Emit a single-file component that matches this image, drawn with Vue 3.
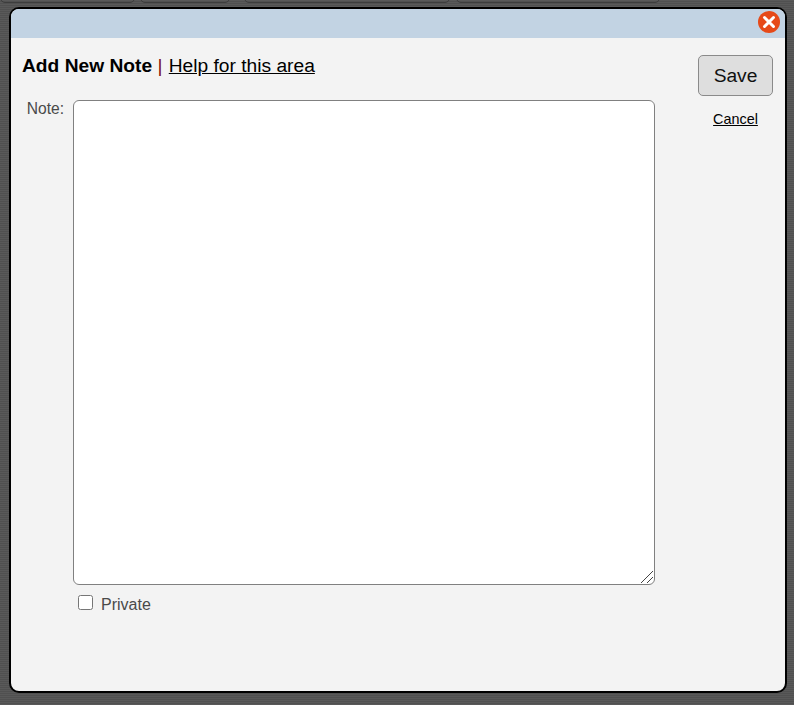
<template>
  <div class="page">
    <div class="tabs">
      <span
        v-for="t in tabs"
        :key="t.left"
        class="tab"
        :style="{ width: t.width + 'px', marginLeft: t.gap + 'px' }"
      ></span>
    </div>
    <div class="modal">
      <div class="bar">
        <button class="close" aria-label="Close">
          <svg width="22" height="22" viewBox="0 0 22 22">
            <circle cx="11" cy="11" r="11" fill="#e64a19" />
            <path d="M6.500 6.500l9 9M15.500 6.500l-9 9" stroke="#fff" stroke-width="3" stroke-linecap="round" />
          </svg>
        </button>
      </div>
      <div class="body">
        <div class="main">
          <div class="title">
            <b>Add New Note</b>&nbsp;<span class="sep">|</span>&nbsp;<a href="#">Help for this area</a>
          </div>
          <div class="row">
            <label class="lbl" for="note">Note:</label>
            <div class="field">
              <div class="note-wrap">
                <textarea id="note" class="note"></textarea>
                <svg class="grip" width="14" height="14" viewBox="0 0 14 14">
                  <path d="M1 13L13 1M7 13l6-6" stroke="#444" stroke-width="1" fill="none" />
                </svg>
              </div>
              <label class="priv"><input type="checkbox" /><span>Private</span></label>
            </div>
          </div>
        </div>
        <div class="side">
          <button class="save">Save</button>
          <a href="#" class="cancel">Cancel</a>
        </div>
      </div>
    </div>
  </div>
</template>

<script setup>
const tabs = [
  { left: 0, gap: 0, width: 135 },
  { left: 140, gap: 5, width: 90 },
  { left: 244, gap: 14, width: 206 },
  { left: 456, gap: 6, width: 204 }
]
</script>

<style>
html, body { margin: 0; background: #555; }
</style>

<style scoped>
.page {
  width: 794px; height: 705px; overflow: hidden; position: relative;
  box-sizing: border-box; padding: 7px 6px 0 9px;
  background: repeating-linear-gradient(180deg, #595959 0, #595959 1px, #505050 1px, #505050 2px);
  font-family: 'Liberation Sans', Arial, sans-serif;
}
.tabs { position: absolute; top: -10px; left: 0; display: flex; }
.tab {
  height: 13px; border: 1px solid #3d3d3d; border-radius: 5px; box-sizing: border-box;
}
.modal {
  width: 778px; height: 686px; box-sizing: border-box;
  border: 2px solid #000; border-radius: 10px; overflow: hidden;
  background: #f3f3f3; display: flex; flex-direction: column;
  position: relative;
}
.bar { height: 29px; background: #c2d3e3; flex: none; }
.close {
  position: absolute; top: 2px; right: 5px; width: 22px; height: 22px;
  padding: 0; border: 0; background: none; display: block;
}
.close svg { display: block; }
.body { display: flex; flex: 1; padding: 17px 12px 0 11px; }
.main { width: 676px; flex: none; }
.title { font-size: 19.2px; line-height: 22px; color: #000; }
.title a { color: #000; text-decoration: underline; margin-left: 1px; }
.sep { color: #7a1010; }
.row { display: flex; margin-top: 23px; }
.lbl {
  width: 42px; margin-right: 9px; text-align: right;
  font-size: 15.6px; line-height: 18px; color: #4a4a4a;
}
.field { display: flex; flex-direction: column; }
.note-wrap { position: relative; }
.note {
  display: block; width: 582px; height: 485px; box-sizing: border-box;
  border: 1px solid #808080; border-radius: 6px; background: #fff;
  margin: 0; padding: 2px; outline: none; resize: none;
}
.grip { position: absolute; right: 1px; bottom: 1px; }
.priv {
  display: flex; align-items: center; margin-top: 10px; padding-left: 5px;
  font-size: 16px; color: #4a4a4a; line-height: 18px;
}
.priv input { width: 15px; height: 15px; margin: 0 8px 4px 0; }
.side { display: flex; flex-direction: column; align-items: center; }
.save {
  width: 75px; height: 41px; box-sizing: border-box;
  border: 1px solid #8a8a8a; border-radius: 5px; background: #dedede;
  font-family: inherit; font-size: 19.2px; color: #111; padding: 0;
}
.cancel { margin-top: 15px; font-size: 14.4px; line-height: 16px; color: #000; }
</style>
